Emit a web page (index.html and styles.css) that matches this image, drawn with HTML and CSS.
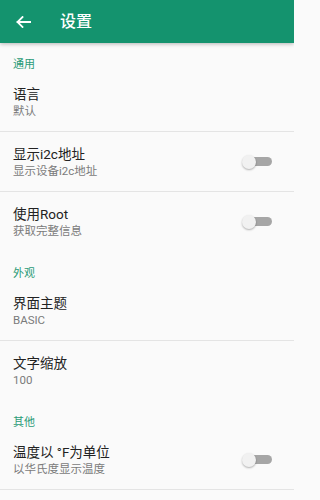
FILE: index.html
```html
<!DOCTYPE html>
<html lang="zh-CN">
<head>
<meta charset="utf-8">
<title>设置</title>
<link rel="stylesheet" href="styles.css">
</head>
<body>
<header class="toolbar">
  <svg class="back" width="15" height="12" viewBox="0 0 15 12" aria-hidden="true">
    <path d="M1.5 6H14.5M6.5 1L1.5 6L6.5 11" fill="none" stroke="#fff" stroke-width="1.8" stroke-linecap="square"/>
  </svg>
  <h1 class="title">设置</h1>
</header>
<main class="list">
  <div class="category">通用</div>
  <div class="pref">
    <div class="text"><div class="pt">语言</div><div class="ps">默认</div></div>
  </div>
  <div class="pref">
    <div class="text"><div class="pt">显示i2c地址</div><div class="ps">显示设备i2c地址</div></div>
    <span class="switch"><span class="thumb"></span></span>
  </div>
  <div class="pref nodiv">
    <div class="text"><div class="pt">使用Root</div><div class="ps">获取完整信息</div></div>
    <span class="switch"><span class="thumb"></span></span>
  </div>
  <div class="category">外观</div>
  <div class="pref">
    <div class="text"><div class="pt">界面主题</div><div class="ps">BASIC</div></div>
  </div>
  <div class="pref nodiv">
    <div class="text"><div class="pt">文字缩放</div><div class="ps">100</div></div>
  </div>
  <div class="category">其他</div>
  <div class="pref">
    <div class="text"><div class="pt">温度以 °F为单位</div><div class="ps">以华氏度显示温度</div></div>
    <span class="switch"><span class="thumb"></span></span>
  </div>
</main>
</body>
</html>
```
FILE: styles.css
```css
html, body {
  margin: 0;
  padding: 0;
  background: #fafafa;
}
body {
  font-family: Roboto, "Noto Sans CJK SC", sans-serif;
  width: 294px;
  overflow: hidden;
}
.toolbar {
  height: 43px;
  background: #14936e;
  display: flex;
  align-items: center;
  padding-left: 16px;
  box-shadow: 0 1px 4px rgba(0, 0, 0, 0.28);
  position: relative;
  z-index: 1;
}
.back {
  display: block;
  flex: none;
}
.title {
  margin: 0 0 0 29px;
  font-size: 16px;
  font-weight: 500;
  color: #fff;
  line-height: 20px;
}
.category {
  height: 29px;
  box-sizing: border-box;
  padding: 14px 13px 0;
  font-size: 11px;
  line-height: 15px;
  color: #2a9a77;
}
.pref {
  display: flex;
  align-items: center;
  height: 60px;
  box-sizing: border-box;
  padding: 0 22px 0 13px;
  border-bottom: 1px solid #e4e4e4;
}
.pref.nodiv {
  border-bottom-color: transparent;
}
.text {
  flex: 1;
  align-self: flex-start;
  padding-top: 13px;
}
.pt {
  font-size: 13.5px;
  line-height: 19px;
  color: #222;
}
.ps {
  font-size: 11.5px;
  line-height: 15px;
  color: #7a7a7a;
}
.switch {
  position: relative;
  width: 30px;
  height: 14px;
  flex: none;
}
.switch::before {
  content: "";
  position: absolute;
  left: 3px;
  right: 0;
  top: 2.5px;
  height: 9px;
  border-radius: 4.5px;
  background: #a6a6a6;
}
.thumb {
  position: absolute;
  left: 0;
  top: 0;
  width: 14px;
  height: 14px;
  border-radius: 50%;
  background: #f1f1f1;
  box-shadow: 0 1px 2px rgba(0, 0, 0, 0.3);
}
```
